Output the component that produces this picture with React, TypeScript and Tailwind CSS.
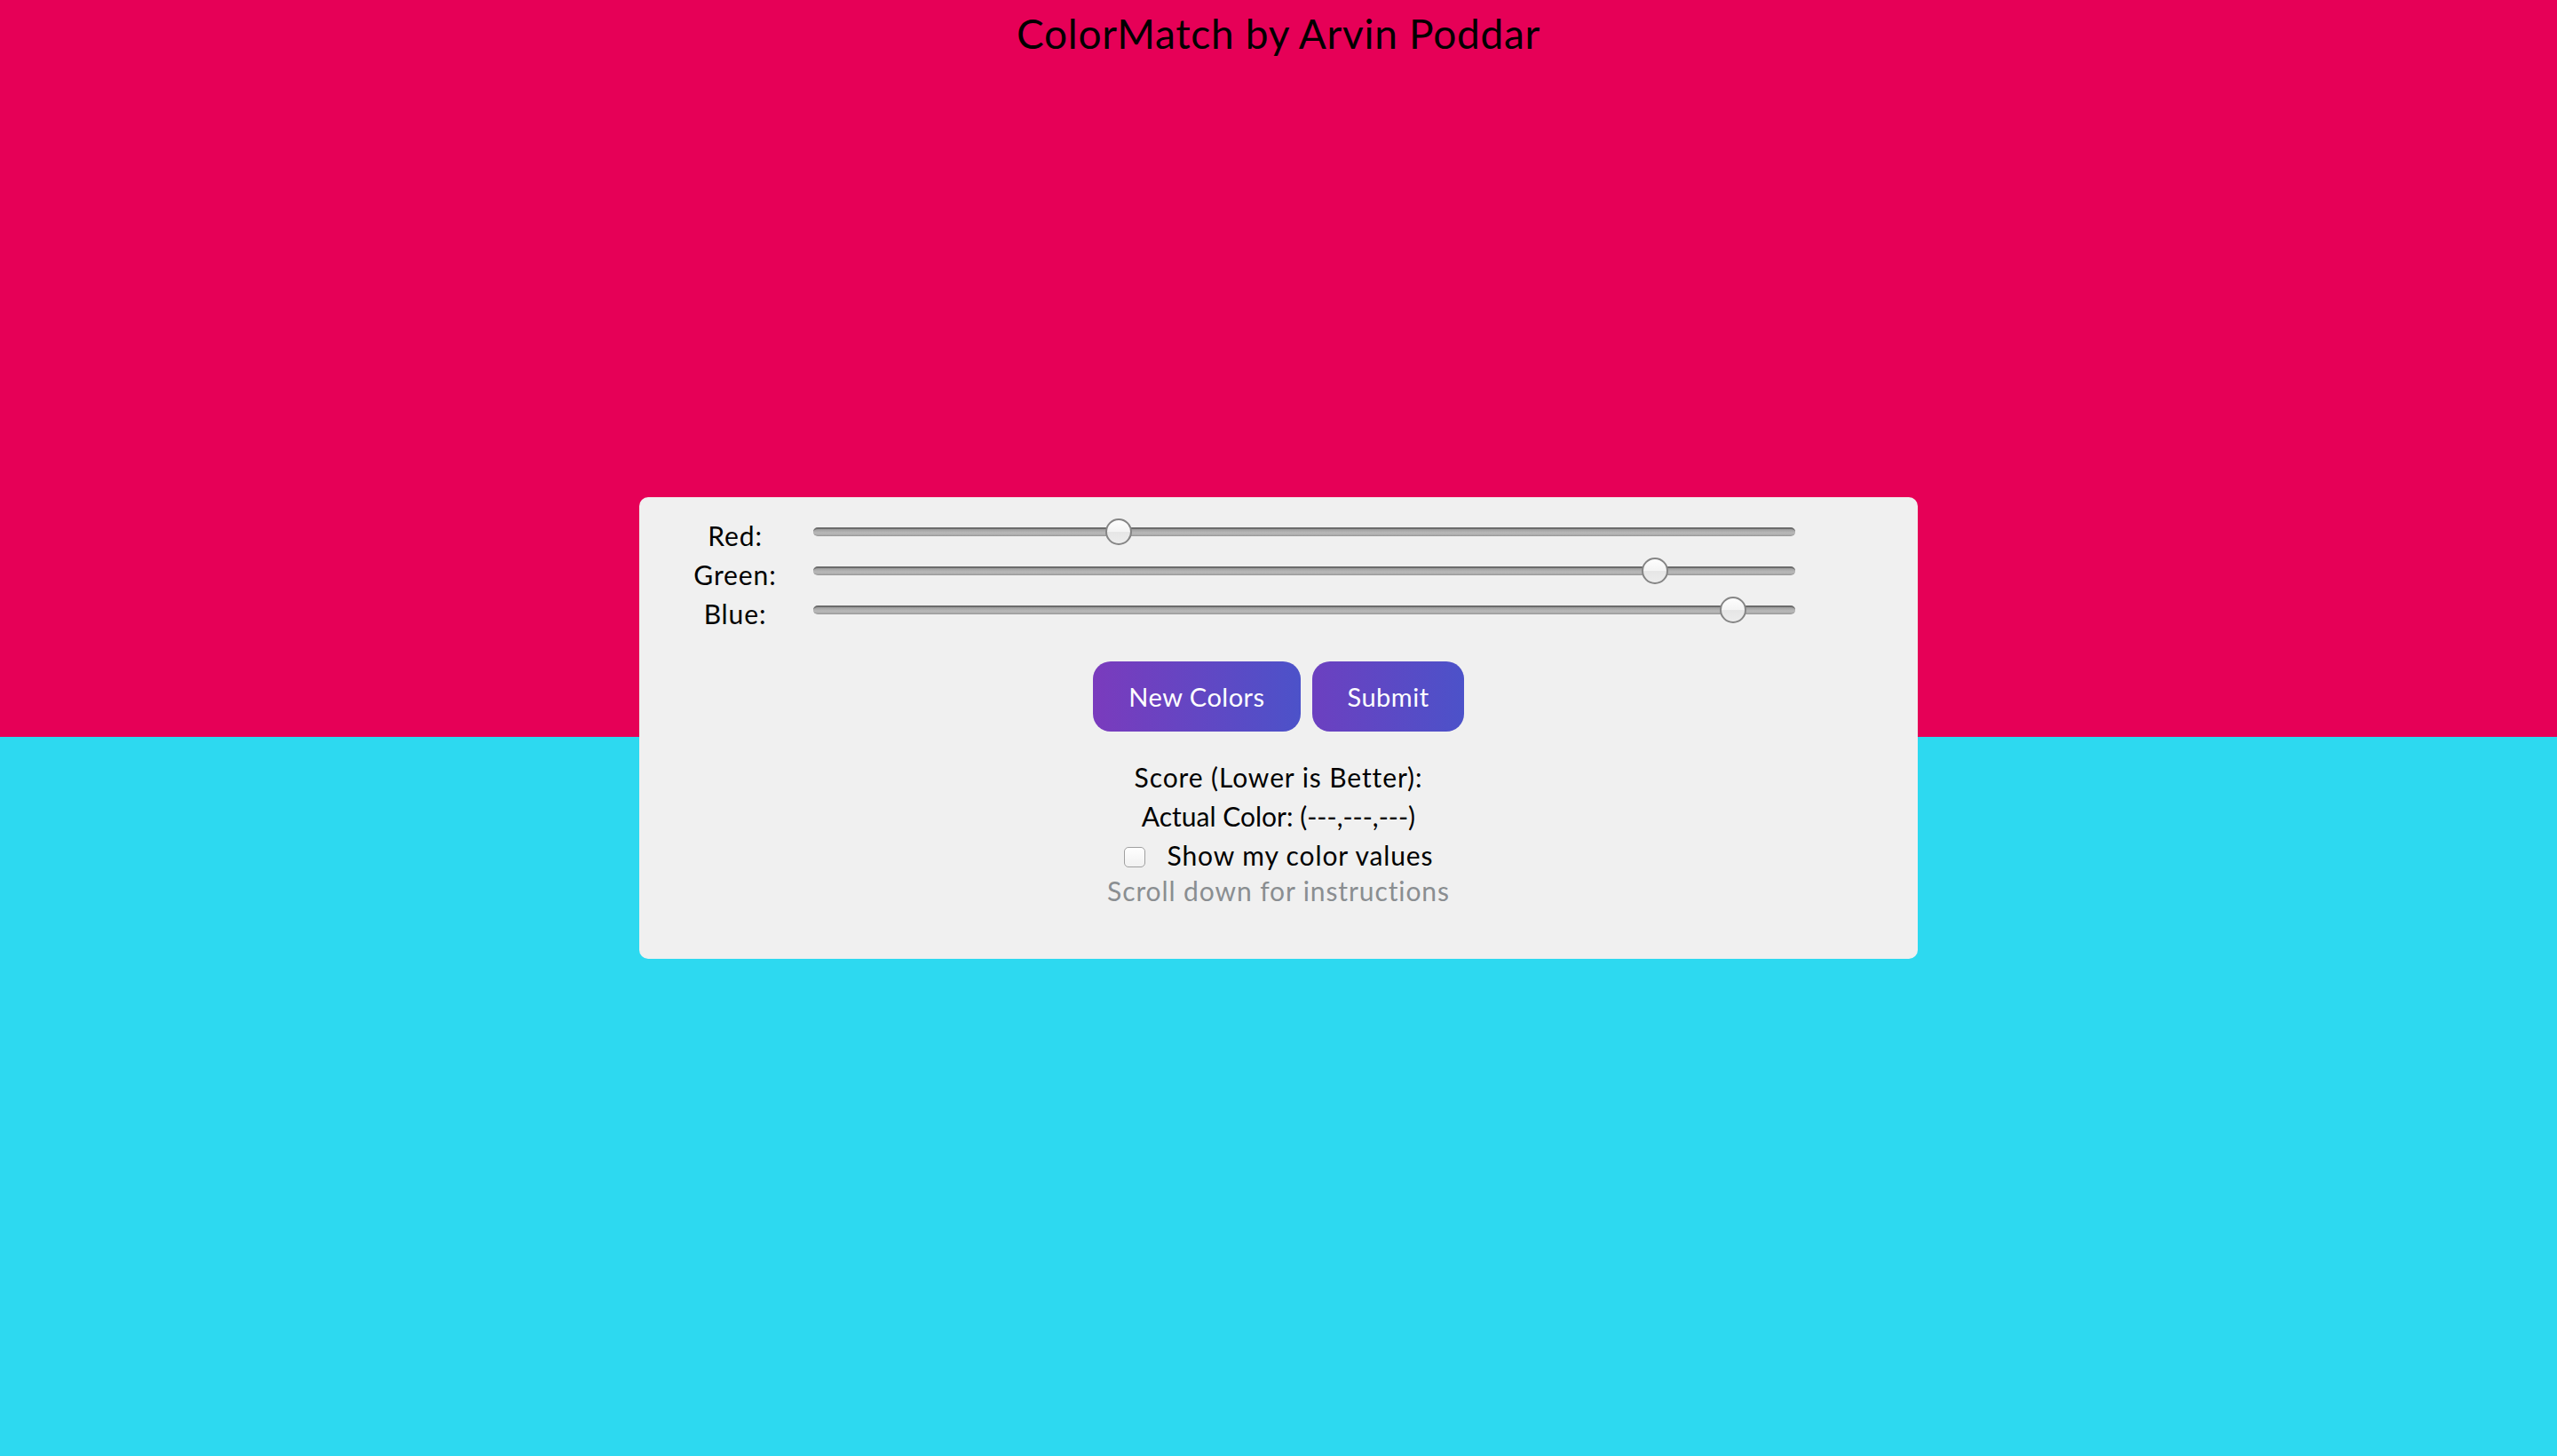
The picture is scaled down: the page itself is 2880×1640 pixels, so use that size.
import React from "react";

const sliders = [
  { label: "Red:", value: 78 },
  { label: "Green:", value: 221 },
  { label: "Blue:", value: 242 },
];

const TRACK_W = 1106;
const THUMB_W = 30;

const Slider = ({ value }: { value: number }) => {
  const left = ((TRACK_W - THUMB_W) * value) / 255;
  return (
    <div className="relative mt-[3px] h-[30px] w-[1106px]">
      <div className="absolute left-0 right-0 top-[10px] h-[10px] rounded-[5px] border-t-[2px] border-t-[#6b6b6b] border-b border-b-[#9a9a9a] bg-[linear-gradient(to_bottom,#9d9d9d,#b9b9b9_60%,#a9a9a9)]" />
      <div
        className="absolute top-0 h-[30px] w-[30px] rounded-full border-[2px] border-[#858585] bg-[linear-gradient(to_bottom,#fdfdfd_0%,#f4f4f4_50%,#e6e6e6_52%,#ececec_100%)]"
        style={{ left }}
      />
    </div>
  );
};

export default function App() {
  return (
    <div className="min-h-[1640px] w-full bg-[linear-gradient(to_bottom,#e60057_0px,#e60057_830px,#2dd9f0_830px)] font-['Lato','Open_Sans',sans-serif] text-black">
      <h1 className="pt-[10px] text-center text-[46px] font-normal leading-[56px] tracking-[0.7px]">
        ColorMatch by Arvin Poddar
      </h1>

      <div className="mx-auto mt-[494px] h-[520px] w-[1440px] rounded-[10px] bg-[#f0f0f0] pt-[21px] text-[30px] leading-[44px] tracking-[0.9px]">
        <div className="flex flex-col">
          {sliders.map((s) => (
            <div key={s.label} className="flex h-[44px] items-start">
              <div className="ml-[40px] w-[136px] text-center">{s.label}</div>
              <div className="ml-[20px]">
                <Slider value={s.value} />
              </div>
            </div>
          ))}
        </div>

        <div className="mt-[32px] flex justify-center gap-[13px]">
          <button className="h-[79px] w-[234px] rounded-[20px] bg-[linear-gradient(to_right,#7a3bbd,#4c52c9)] text-[29px] tracking-[0.5px] text-white">
            New Colors
          </button>
          <button className="h-[79px] w-[171px] rounded-[20px] bg-[linear-gradient(to_right,#6c40c0,#4c52c9)] text-[29px] tracking-[0.5px] text-white">
            Submit
          </button>
        </div>

        <div className="mt-[29px] flex flex-col items-center">
          <div className="h-[44px]">Score (Lower is Better):</div>
          <div className="h-[44px] tracking-normal">Actual Color: (---,---,---)</div>
          <label className="flex h-[40px] items-start gap-[25px]">
            <span className="mt-[13px] block h-[23px] w-[24px] rounded-[5px] border border-[#a0a0a0] bg-[linear-gradient(to_bottom,#ffffff,#f1f1f1)]" />
            <span>Show my color values</span>
          </label>
          <div className="h-[44px] text-[#8a8e91]">Scroll down for instructions</div>
        </div>
      </div>
    </div>
  );
}
